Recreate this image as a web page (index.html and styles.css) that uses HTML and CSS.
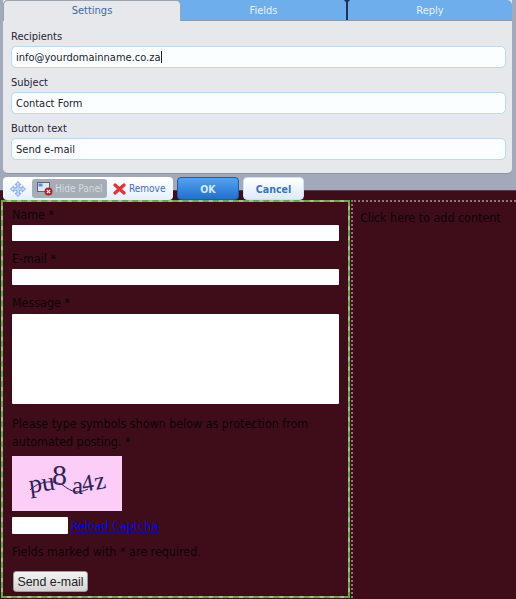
FILE: index.html
```html
<!DOCTYPE html>
<html lang="en">
<head>
    <meta charset="UTF-8">
    <title>Contact Form</title>
    <link rel="stylesheet" href="styles.css">
</head>
<body>
    <div class="top">
        <div class="panel">
            <div class="tabs">
                <div class="tab tab-settings">Settings</div>
                <div class="tab tab-fields">Fields</div>
                <div class="tab tab-reply">Reply</div>
            </div>
            <div class="settings">
                <label class="label">Recipients</label>
                <div class="input">info@yourdomainname.co.za<span class="caret"></span></div>
                <label class="label">Subject</label>
                <div class="input">Contact Form</div>
                <label class="label">Button text</label>
                <div class="input">Send e-mail</div>
            </div>
        </div>
    </div>

    <div class="toolbar">
        <div class="tool-group">
            <svg class="move-icon" width="16" height="16" viewBox="0 0 16 16">
                <path d="M8 0.5 L11 3.8 H9.2 V6.8 H12.2 V5 L15.5 8 L12.2 11 V9.2 H9.2 V12.2 H11 L8 15.5 L5 12.2 H6.8 V9.2 H3.8 V11 L0.5 8 L3.8 5 V6.8 H6.8 V3.8 H5 Z" fill="#c4d8f7" stroke="#6f9ae0" stroke-width="0.8"/>
            </svg>
            <div class="hide-panel">
                <svg width="16" height="15" viewBox="0 0 16 15">
                    <rect x="0.5" y="1.5" width="12" height="9" fill="#dfe6ee" stroke="#5b6570"/>
                    <rect x="1.5" y="2.5" width="4" height="3" fill="#5c8fd0"/>
                    <circle cx="11.5" cy="10.5" r="4" fill="#b3202c"/>
                    <path d="M9.8 8.8 L13.2 12.2 M13.2 8.8 L9.8 12.2" stroke="#fff" stroke-width="1.2"/>
                </svg>
                <span>Hide Panel</span>
            </div>
            <div class="remove">
                <svg width="13" height="12" viewBox="0 0 13 12">
                    <path d="M2 2 L11 10 M11 2 L2 10" stroke="#e8303a" stroke-width="3.2" stroke-linecap="round"/>
                </svg>
                <span>Remove</span>
            </div>
        </div>
        <button class="btn btn-ok">OK</button>
        <button class="btn btn-cancel">Cancel</button>
    </div>

    <div class="content">
        <div class="form-box">
            <div class="field-label">Name *</div>
            <div class="text-field"></div>
            <div class="field-label">E-mail *</div>
            <div class="text-field"></div>
            <div class="field-label">Message *</div>
            <div class="text-area"></div>
            <p class="note">Please type symbols shown below as protection from automated posting. *</p>
            <svg class="captcha" width="110" height="55" viewBox="0 0 110 55">
                <rect width="110" height="55" fill="#fbcdf7"/>
                <path d="M18 34 C28 24 44 24 52 30 S66 38 76 33" fill="none" stroke="#2b2458" stroke-width="1"/>
                <g fill="#2b2458" font-family="Liberation Serif, serif">
                    <text x="18" y="37" font-size="26" transform="rotate(-8 18 37)">pu</text>
                    <text x="40" y="29" font-size="30">8</text>
                    <text x="60" y="38" font-size="25">a</text>
                    <text x="71" y="36" font-size="24" transform="rotate(-10 71 36)">4</text>
                    <text x="84" y="34" font-size="25" transform="rotate(-12 84 34)">z</text>
                </g>
            </svg>
            <div class="captcha-row">
                <div class="captcha-input"></div>
                <a class="reload" href="#">Reload Captcha</a>
            </div>
            <p class="required">Fields marked with * are required.</p>
            <button class="send">Send e-mail</button>
        </div>
        <div class="add-box">Click here to add content</div>
    </div>
</body>
</html>
```

FILE: styles.css
```css
html, body {
    margin: 0;
    padding: 0;
}
body {
    width: 516px;
    height: 599px;
    overflow: hidden;
    background-color: #3f0d19;
    font-family: "DejaVu Sans", sans-serif;
    font-stretch: condensed;
}
.top {
    height: 191px;
    box-sizing: border-box;
    padding: 0 4px 0 3px;
    background-color: #a1a9ba;
    border-bottom: 1px solid #5a3a48;
}
.panel {
    height: 174px;
    background-color: #e6e8ec;
    border-radius: 0 0 5px 5px;
    border-bottom: 1px solid #8d929c;
    box-sizing: border-box;
}
.tabs {
    display: flex;
    height: 21px;
    background-color: #6eaeec;
    border-bottom: 1px solid #8d99a8;
    box-sizing: border-box;
    border-radius: 5px 5px 0 0;
    font-size: 11px;
    line-height: 21px;
    text-align: center;
}
.tab {
    color: #e6f1fb;
}
.tab-settings {
    width: 178px;
    height: 21px;
    background-color: #e6e8ec;
    color: #3f6a9c;
    border-radius: 5px 5px 0 0;
    border: 1px solid #9aa3ae;
    border-bottom: none;
    box-sizing: border-box;
    line-height: 20px;
}
.tab-fields {
    position: relative;
    width: 165px;
    height: 20px;
    border-right: 2px solid #1d3358;
}
/* little knob on top of the divider */
.tab-fields::after {
    content: "";
    position: absolute;
    top: -1px;
    right: -4px;
    width: 6px;
    height: 3px;
    border-radius: 0 0 3px 3px;
    background-color: #1d3358;
}
.tab-reply {
    flex: 1;
}
.settings {
    padding: 8px 6px 0 8px;
}
.label {
    display: block;
    height: 17px;
    font-size: 11px;
    line-height: 16px;
    color: #26263a;
}
.input {
    height: 22px;
    box-sizing: border-box;
    margin-bottom: 7px;
    padding-left: 4px;
    background-color: #fbfeff;
    border: 1px solid #bcd8f6;
    border-radius: 5px;
    font-size: 11px;
    line-height: 21px;
    color: #22222e;
}
.caret {
    display: inline-block;
    width: 1px;
    height: 12px;
    vertical-align: -2px;
    background-color: #222;
}
.toolbar {
    position: relative;
    display: flex;
    height: 23px;
    margin: -14px 0 -9px 3px;
    gap: 4px;
}
.tool-group {
    display: flex;
    align-items: center;
    width: 170px;
    box-sizing: border-box;
    padding-left: 7px;
    background: linear-gradient(#ffffff, #e5f0fb);
    border-radius: 4px;
    font-size: 10px;
    white-space: nowrap;
}
.hide-panel {
    display: flex;
    align-items: center;
    gap: 2px;
    width: 75px;
    height: 19px;
    margin-left: 6px;
    padding-left: 5px;
    box-sizing: border-box;
    background-color: #a5adb6;
    border-radius: 3px;
    color: #d5dae0;
}
.remove {
    display: flex;
    align-items: center;
    gap: 3px;
    margin-left: 6px;
    color: #3d6fb8;
}
.btn {
    height: 23px;
    box-sizing: border-box;
    padding: 0;
    border-radius: 4px;
    font-family: "DejaVu Sans", sans-serif;
    font-stretch: condensed;
    font-size: 10.5px;
    font-weight: bold;
}
.btn-ok {
    width: 62px;
    background: linear-gradient(#55a3ee, #1f6fd0);
    border: 1px solid #1d5aa8;
    color: #d5e8fa;
}
.btn-cancel {
    width: 61px;
    background: linear-gradient(#ffffff, #dcebfa);
    border: 1px solid #cfe0f4;
    color: #3873c4;
}
.content {
    display: flex;
    height: 408px;
    box-sizing: border-box;
    padding: 9px 0 1px 1px;
    font-size: 12.4px;
    color: #0c0408;
}
.form-box {
    width: 349px;
    box-sizing: border-box;
    padding: 4px 9px 0 9px;
    border: 2px dashed #5fae45;
    background: linear-gradient(#3f0d19, #3f0d19) padding-box, #a8b898 border-box;
}
.field-label {
    height: 18px;
    line-height: 18px;
}
.text-field {
    height: 16px;
    margin: 1px 0 9px;
    background-color: #fff;
    border-radius: 1px;
}
.text-area {
    height: 90px;
    margin-top: 2px;
    background-color: #fff;
    border-radius: 1px;
}
.note {
    margin: 11px 0 0;
    line-height: 18px;
}
.captcha {
    display: block;
    margin-top: 5px;
}
.captcha-row {
    display: flex;
    align-items: center;
    gap: 3px;
    margin-top: 6px;
}
.captcha-input {
    width: 56px;
    height: 17px;
    background-color: #fff;
    border-radius: 1px;
}
.reload {
    color: #0000f0;
    text-decoration: underline dashed;
    text-underline-offset: 2px;
}
.required {
    margin: 9px 0 0;
    line-height: 18px;
}
.send {
    display: block;
    width: 75px;
    height: 21px;
    margin-top: 10px;
    margin-left: 1px;
    padding: 0;
    background: linear-gradient(#f4f4f4, #d4d4d4);
    border: 1px solid #9a9a9a;
    border-radius: 3px;
    font-family: "Liberation Sans", sans-serif;
    font-size: 12.4px;
    color: #222;
}
.add-box {
    flex: 1;
    margin-left: 1px;
    padding: 8px 0 0 7px;
    border: 2px dotted #8f757b;
    border-right: none;
    border-bottom: none;
}
```
